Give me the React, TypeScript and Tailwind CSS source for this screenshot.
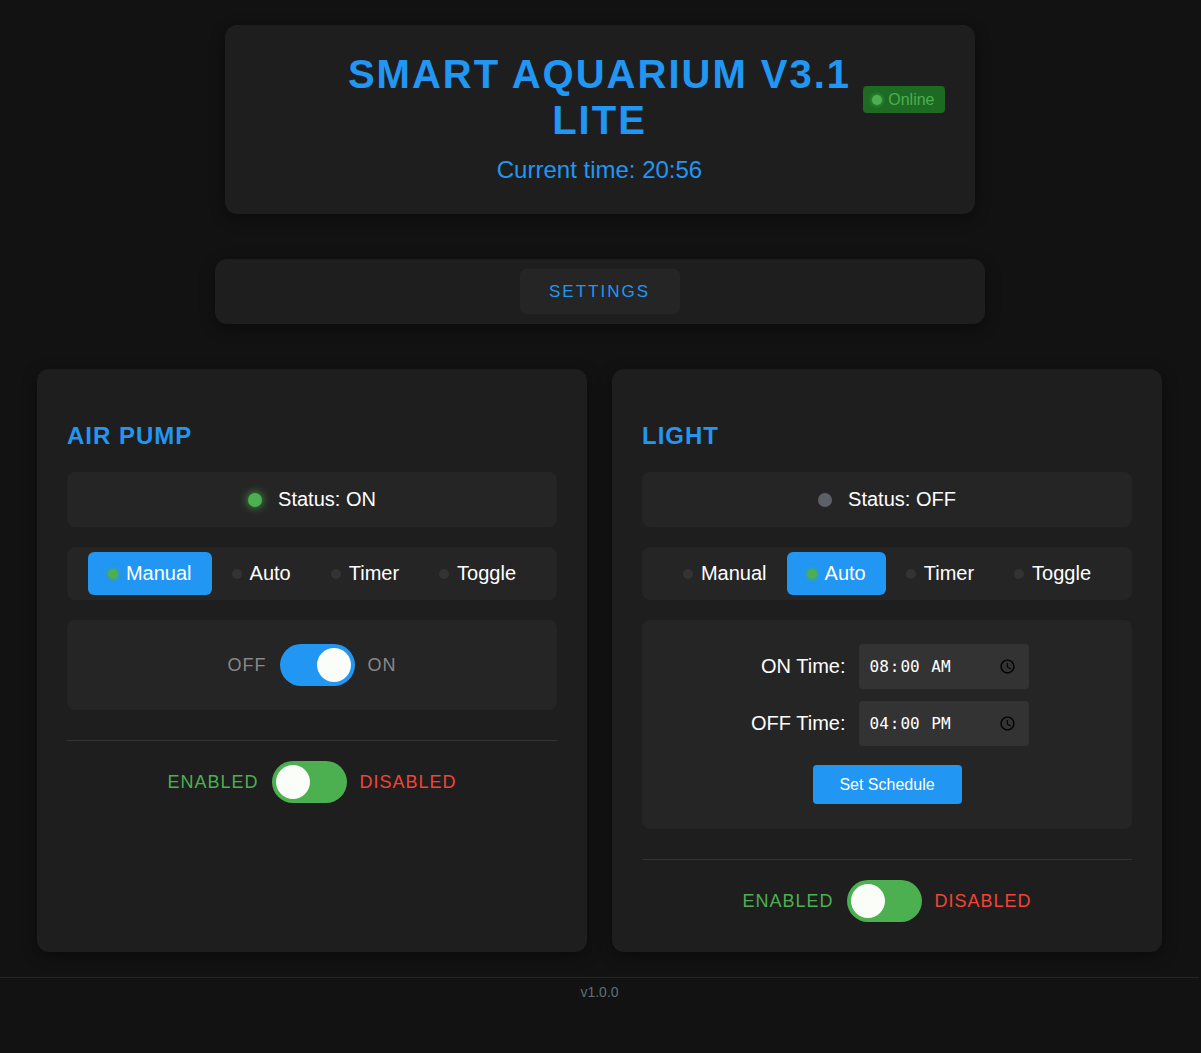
const modes = ["Manual", "Auto", "Timer", "Toggle"];

function Switch({ on, color }: { on: boolean; color: string }) {
  return (
    <div
      className={`relative h-[42px] w-[75px] shrink-0 rounded-full ${color}`}
    >
      <div
        className={`absolute top-[4px] h-[34px] w-[34px] rounded-full bg-[#fbfdf9] ${on ? "right-[4px]" : "left-[4px]"}`}
      ></div>
    </div>
  );
}

function ModeBar({ active }: { active: string }) {
  return (
    <div className="mt-[20px] flex h-[53px] items-center justify-center rounded-lg bg-[#252525] p-[5px]">
      {modes.map((m) => (
        <div
          key={m}
          className={`flex h-[43px] items-center gap-[8px] rounded-md px-[20px] text-[20px] text-white ${m === active ? "bg-[#2196f3]" : ""}`}
        >
          <span
            className={`h-[10px] w-[10px] rounded-full ${m === active ? "bg-[#4caf50] shadow-[0_0_5px_#4caf50]" : "bg-[#333333]"}`}
          ></span>
          {m}
        </div>
      ))}
    </div>
  );
}

function EnableRow() {
  return (
    <>
      <div className="mt-[30px] h-px bg-[#333333]"></div>
      <div className="mt-[20px] flex items-center justify-center gap-[13px] text-[18px] tracking-[1px]">
        <span className="text-[#4caf50]">ENABLED</span>
        <Switch on={false} color="bg-[#4caf50]" />
        <span className="text-[#f44336]">DISABLED</span>
      </div>
    </>
  );
}

function StatusBox({ on }: { on: boolean }) {
  return (
    <div className="flex h-[55px] items-center justify-center rounded-lg bg-[#252525] text-[20px] text-white">
      <span
        className={`mr-[16px] h-[14px] w-[14px] rounded-full ${on ? "bg-[#4caf50] shadow-[0_0_10px_#4caf50]" : "bg-[#5c6068]"}`}
      ></span>
      Status: {on ? "ON" : "OFF"}
    </div>
  );
}

function TimeRow({ label, value }: { label: string; value: string }) {
  return (
    <div className="flex items-center justify-center gap-[13px]">
      <label className="w-[100px] text-right text-[20px] text-white">
        {label}
      </label>
      <input
        type="time"
        defaultValue={value}
        className="h-[45px] w-[170px] rounded bg-[#333333] px-[10px] font-['DejaVu_Sans_Mono',monospace] text-[16px] text-white"
      />
    </div>
  );
}

export default function App() {
  return (
    <div className="min-h-screen bg-[#121212] pt-[25px] pr-[2px] font-['Liberation_Sans',Arial,sans-serif] leading-[normal]">
      {/* Header */}
      <div className="relative mx-auto w-[750px] rounded-xl bg-[#1e1e1e] pt-[26px] pb-[30px] text-center shadow-[0_4px_15px_rgba(0,0,0,0.4)]">
        <h1 className="mx-auto max-w-[560px] text-[40px] leading-[46px] font-bold tracking-[2px] text-[#2196f3]">
          SMART AQUARIUM V3.1 LITE
        </h1>
        <div className="mt-[13px] text-[24px] text-[#2196f3]">
          Current time: 20:56
        </div>
        <div className="absolute top-[61px] right-[30px] flex h-[27px] items-center gap-[6px] rounded bg-[#1d6a23] pr-[10px] pl-[9px] text-[16px] text-[#4caf50]">
          <span className="h-[10px] w-[10px] rounded-full bg-[#4caf50] shadow-[0_0_4px_#4caf50]"></span>
          Online
        </div>
      </div>

      {/* Nav */}
      <div className="mx-auto mt-[45px] flex w-[770px] justify-center rounded-xl bg-[#1e1e1e] p-[10px] shadow-[0_4px_15px_rgba(0,0,0,0.4)]">
        <div className="flex h-[45px] w-[160px] items-center justify-center rounded-md bg-[#252525] text-[17px] tracking-[2px] text-[#2196f3]">
          SETTINGS
        </div>
      </div>

      {/* Devices */}
      <div className="mx-auto mt-[45px] grid w-[1125px] grid-cols-2 gap-[25px]">
        <div className="rounded-xl bg-[#1e1e1e] p-[30px] shadow-[0_4px_15px_rgba(0,0,0,0.4)]">
          <h2 className="mt-[23px] mb-[22px] text-[24px] font-bold tracking-[1px] text-[#2196f3]">
            AIR PUMP
          </h2>
          <StatusBox on={true} />
          <ModeBar active="Manual" />
          <div className="mt-[20px] flex items-center justify-center gap-[13px] rounded-lg bg-[#252525] py-[24px] text-[18px] tracking-[1px] text-[#888888]">
            <span>OFF</span>
            <Switch on={true} color="bg-[#2196f3]" />
            <span>ON</span>
          </div>
          <EnableRow />
        </div>

        <div className="rounded-xl bg-[#1e1e1e] p-[30px] shadow-[0_4px_15px_rgba(0,0,0,0.4)]">
          <h2 className="mt-[23px] mb-[22px] text-[24px] font-bold tracking-[1px] text-[#2196f3]">
            LIGHT
          </h2>
          <StatusBox on={false} />
          <ModeBar active="Auto" />
          <div className="mt-[20px] flex flex-col items-center rounded-lg bg-[#252525] pt-[24px] pb-[25px]">
            <div className="flex flex-col gap-[12px]">
              <TimeRow label="ON Time:" value="08:00" />
              <TimeRow label="OFF Time:" value="16:00" />
            </div>
            <button className="mt-[19px] h-[39px] w-[149px] rounded bg-[#2196f3] text-[16px] text-white">
              Set Schedule
            </button>
          </div>
          <EnableRow />
        </div>
      </div>

      {/* Footer */}
      <div className="mt-[25px] border-t border-[#262626] pt-[6px] pb-[40px] text-center text-[14px] text-[#5c6f7a]">
        v1.0.0
      </div>
    </div>
  );
}
